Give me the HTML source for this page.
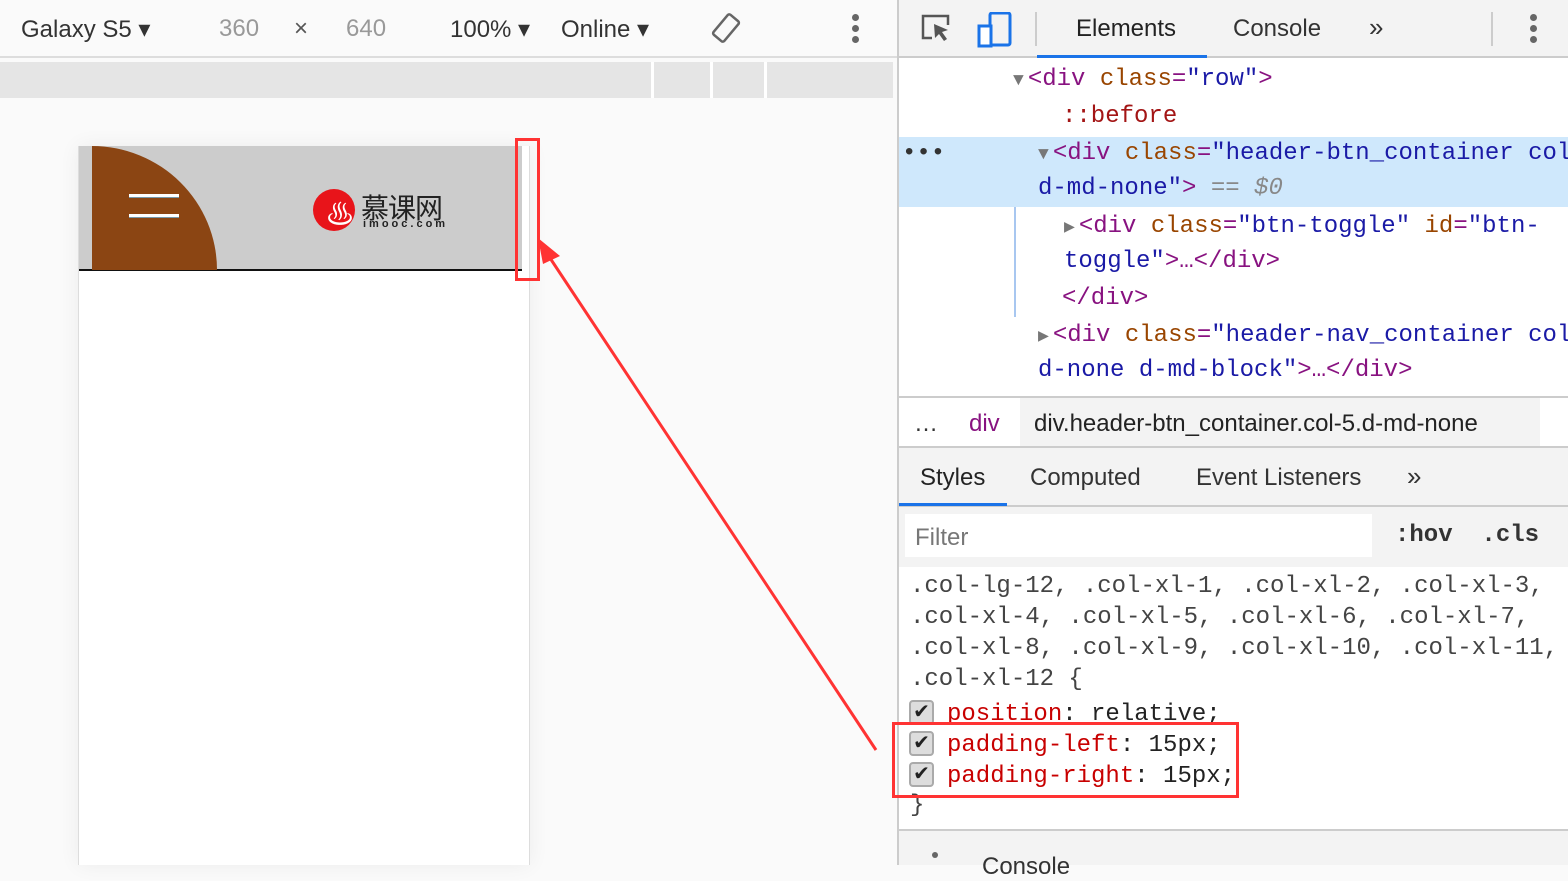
<!DOCTYPE html>
<html><head><meta charset="utf-8"><style>
*{margin:0;padding:0;box-sizing:border-box}
body{width:1568px;height:865px;overflow:hidden;position:relative;background:#fafafa;font-family:"Liberation Sans","Noto Sans CJK SC",sans-serif}
.a{position:absolute;white-space:pre}
.m{font-family:"Liberation Mono","DejaVu Sans Mono",monospace;font-size:24px}
.t{color:#881280}.at{color:#994500}.v{color:#1a1aa6}.g{color:#777;margin-right:4px;font-size:18px}
.s{font-size:24px;color:#333}
.cb{position:absolute;left:909px;width:25px;height:25px;border:2px solid #aaa;border-radius:4px;background:#ddd;font-size:20px;line-height:21px;text-align:center;color:#222}
</style></head><body>
<div class="a" style="left:0;top:0;width:898px;height:58px;background:#fafafa;border-bottom:2px solid #ddd"></div>
<div class="a s" style="left:21px;top:15px">Galaxy S5 ▾</div>
<div class="a s" style="left:219px;top:15px;color:#999">360</div>
<div class="a s" style="left:294px;top:15px;color:#555">×</div>
<div class="a s" style="left:346px;top:15px;color:#999">640</div>
<div class="a s" style="left:450px;top:15px">100% ▾</div>
<div class="a s" style="left:561px;top:15px">Online ▾</div>
<svg class="a" style="left:708px;top:12px" width="36" height="34" viewBox="0 0 36 34"><rect x="11" y="3" width="14" height="26" rx="2" transform="rotate(40 18 16)" fill="none" stroke="#666" stroke-width="2.5"/></svg>
<div class="a" style="left:852px;top:14px;width:7px;height:7px;border-radius:50%;background:#666;box-shadow:0 11px 0 #666,0 22px 0 #666"></div>
<div class="a" style="left:0;top:62px;width:893px;height:36px;background:#e5e5e5"></div>
<div class="a" style="left:651px;top:62px;width:3px;height:36px;background:#fff"></div>
<div class="a" style="left:710px;top:62px;width:3px;height:36px;background:#fff"></div>
<div class="a" style="left:764px;top:62px;width:3px;height:36px;background:#fff"></div>
<div class="a" style="left:78px;top:146px;width:452px;height:719px;background:#fff;border-left:1px solid #ddd;border-right:1px solid #ddd;box-shadow:0 0 20px rgba(0,0,0,.06)"></div>
<div class="a" style="left:79px;top:146px;width:443px;height:125px;background:#ccc;border-bottom:2px solid #111"></div>
<div class="a" style="left:92px;top:146px;width:125px;height:124px;background:#8b4513;border-top-right-radius:125px 124px"></div>
<div class="a" style="left:129px;top:194px;width:50px;height:3px;background:#fff;box-shadow:0 1px 0 #79a"></div>
<div class="a" style="left:129px;top:214px;width:50px;height:3px;background:#fff;box-shadow:0 1px 0 #79a"></div>
<div class="a" style="left:313px;top:189px;width:42px;height:42px;border-radius:50%;background:#e8141a"></div>
<div class="a" style="left:326px;top:193px;color:#fff;font-size:28px">♨</div>
<div class="a" style="left:361px;top:187px;font-size:28px;color:#222;letter-spacing:-1px">慕课网</div>
<div class="a" style="left:363px;top:218px;font-size:11px;color:#222;letter-spacing:3px;font-weight:bold">imooc.com</div>
<div class="a" style="left:515px;top:138px;width:25px;height:143px;border:3px solid #f33"></div>
<svg class="a" style="left:0;top:0" width="898" height="865"><line x1="876" y1="750" x2="548" y2="255" stroke="#f33" stroke-width="3"/><polygon points="538,238 560,256 543,264" fill="#f33"/></svg>
<div class="a" style="left:897px;top:0;width:671px;height:865px;background:#fff;border-left:2px solid #ccc"></div>
<div class="a" style="left:899px;top:0;width:669px;height:58px;background:#f3f3f3;border-bottom:2px solid #ccc"></div>
<svg class="a" style="left:918px;top:12px" width="100" height="36"><path d="M14 26H5V4h25v9" fill="none" stroke="#555" stroke-width="2.5"/><path d="M16 12l14 6-6 2 5 7-3 2-5-7-4 4z" fill="#555"/><rect x="72" y="1" width="20" height="32" rx="2" fill="none" stroke="#1a73e8" stroke-width="3"/><rect x="61" y="14" width="12" height="20" fill="#fff" stroke="#1a73e8" stroke-width="3"/></svg>
<div class="a" style="left:1035px;top:12px;width:2px;height:34px;background:#ccc"></div>
<div class="a s" style="left:1076px;top:15px;color:#222">Elements</div>
<div class="a" style="left:1037px;top:55px;width:170px;height:3px;background:#1a73e8"></div>
<div class="a s" style="left:1233px;top:15px">Console</div>
<div class="a s" style="left:1369px;top:12px;font-size:26px">»</div>
<div class="a" style="left:1491px;top:12px;width:2px;height:34px;background:#ccc"></div>
<div class="a" style="left:1530px;top:14px;width:7px;height:7px;border-radius:50%;background:#666;box-shadow:0 11px 0 #666,0 22px 0 #666"></div>
<div class="a" style="left:899px;top:137px;width:669px;height:70px;background:#cfe8fc"></div>
<div class="a" style="left:1014px;top:207px;width:2px;height:110px;background:#a8c7f0"></div>
<div class="a m" style="left:1013px;top:66px"><span class="g">▼</span><span class="t">&lt;div </span><span class="at">class</span><span class="t">=</span><span class="v">"row"</span><span class="t">&gt;</span></div>
<div class="a m" style="left:1062px;top:103px;color:#a31515">::before</div>
<div class="a m" style="left:902px;top:140px;color:#333">•••</div>
<div class="a m" style="left:1038px;top:140px"><span class="g">▼</span><span class="t">&lt;div </span><span class="at">class</span><span class="t">=</span><span class="v">"header-btn_container col-5</span></div>
<div class="a m" style="left:1038px;top:175px"><span class="v">d-md-none"</span><span class="t">&gt;</span> <span style="color:#888;font-style:italic">== $0</span></div>
<div class="a m" style="left:1064px;top:213px"><span class="g">▶</span><span class="t">&lt;div </span><span class="at">class</span><span class="t">=</span><span class="v">"btn-toggle"</span> <span class="at">id</span><span class="t">=</span><span class="v">"btn-</span></div>
<div class="a m" style="left:1064px;top:248px"><span class="v">toggle"</span><span class="t">&gt;…&lt;/div&gt;</span></div>
<div class="a m t" style="left:1062px;top:285px">&lt;/div&gt;</div>
<div class="a m" style="left:1038px;top:322px"><span class="g">▶</span><span class="t">&lt;div </span><span class="at">class</span><span class="t">=</span><span class="v">"header-nav_container col-</span></div>
<div class="a m" style="left:1038px;top:357px"><span class="v">d-none d-md-block"</span><span class="t">&gt;…&lt;/div&gt;</span></div>
<div class="a" style="left:899px;top:396px;width:669px;height:2px;background:#ccc"></div>
<div class="a" style="left:1020px;top:398px;width:520px;height:48px;background:#f3f3f3"></div>
<div class="a s" style="left:914px;top:410px">…</div>
<div class="a s" style="left:969px;top:410px;color:#881280">div</div>
<div class="a s" style="left:1034px;top:410px;color:#222">div.header-btn_container.col-5.d-md-none</div>
<div class="a" style="left:899px;top:446px;width:669px;height:2px;background:#ccc"></div>
<div class="a" style="left:899px;top:448px;width:669px;height:119px;background:#f3f3f3"></div>
<div class="a" style="left:899px;top:505px;width:669px;height:2px;background:#ccc"></div>
<div class="a s" style="left:920px;top:464px;color:#222">Styles</div>
<div class="a" style="left:899px;top:503px;width:108px;height:3px;background:#1a73e8"></div>
<div class="a s" style="left:1030px;top:464px">Computed</div>
<div class="a s" style="left:1196px;top:464px">Event Listeners</div>
<div class="a s" style="left:1407px;top:461px;font-size:26px">»</div>
<div class="a" style="left:905px;top:514px;width:467px;height:43px;background:#fff"></div>
<div class="a s" style="left:915px;top:524px;color:#777">Filter</div>
<div class="a m" style="left:1395px;top:522px;color:#333;font-weight:bold">:hov  .cls  +</div>
<div class="a m" style="left:910px;top:571px;color:#444;line-height:31px">.col-lg-12, .col-xl-1, .col-xl-2, .col-xl-3,
.col-xl-4, .col-xl-5, .col-xl-6, .col-xl-7,
.col-xl-8, .col-xl-9, .col-xl-10, .col-xl-11,
.col-xl-12 {</div>
<div class="cb" style="top:700px">✔</div>
<div class="cb" style="top:731px">✔</div>
<div class="cb" style="top:762px">✔</div>
<div class="a m" style="left:947px;top:699px;line-height:31px;color:#222"><span style="color:#c80000">position</span>: relative;
<span style="color:#c80000">padding-left</span>: 15px;
<span style="color:#c80000">padding-right</span>: 15px;</div>
<div class="a m" style="left:910px;top:792px;color:#444">}</div>
<div class="a" style="left:892px;top:722px;width:347px;height:76px;border:3px solid #f33"></div>
<div class="a" style="left:899px;top:829px;width:669px;height:36px;background:#f3f3f3;border-top:2px solid #ccc"></div>
<div class="a" style="left:932px;top:852px;width:6px;height:6px;border-radius:50%;background:#666"></div>
<div class="a s" style="left:982px;top:853px">Console</div>
</body></html>
